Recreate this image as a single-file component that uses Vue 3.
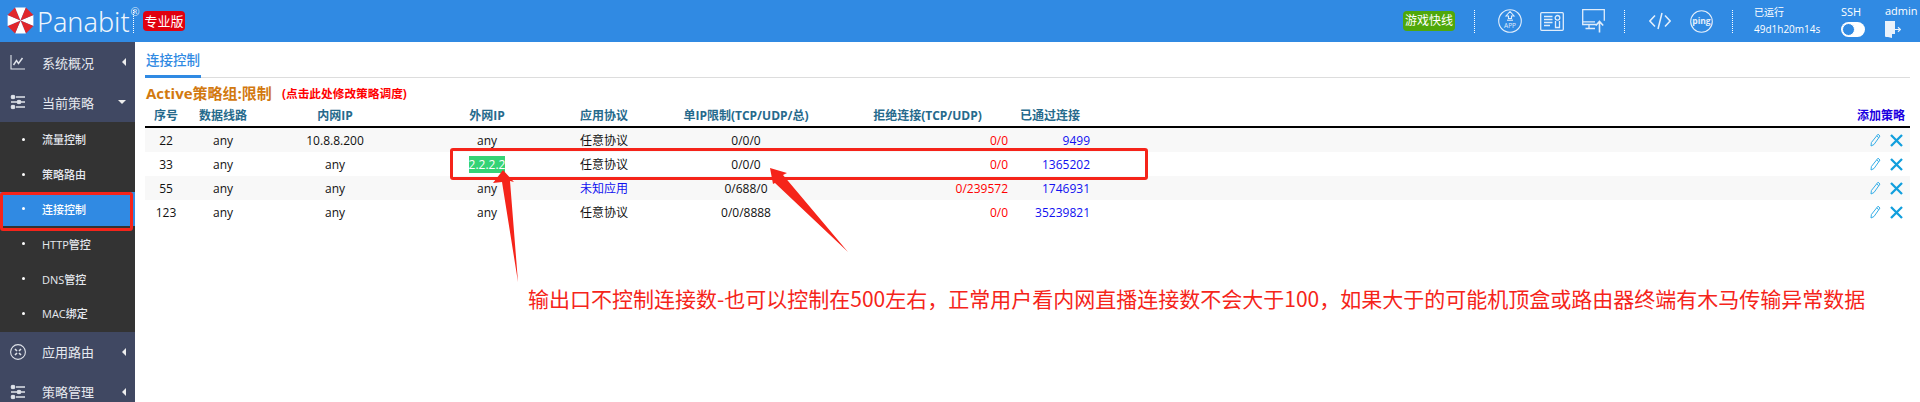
<template>
  <div class="page">
    <header class="topbar">
      <div class="brand">
        <svg class="logo" width="28" height="30" viewBox="0 0 28 30">
          <polygon v-for="(s, i) in umbrella" :key="i" :points="s.points" :fill="s.fill" />
        </svg>
        <span class="brand-name">Panabit</span>
        <span class="reg">®</span>
      </div>
      <i class="dots first"></i>
      <span class="edition">专业版</span>

      <div class="top-right">
        <span class="game">游戏快线</span>
        <i class="dots"></i>
        <div class="tools">
          <svg width="24" height="24" viewBox="0 0 24 24" fill="none" stroke="#e0edfb" stroke-width="1.100">
            <circle cx="12" cy="12" r="11.300" />
            <path d="M12 2.500 8 7h2.500v2.500h3V7H16z" />
            <path d="M9 11.200h6" />
            <text x="12" y="18.800" class="app-txt">APP</text>
          </svg>
          <svg width="24" height="19" viewBox="0 0 24 19" fill="none" stroke="#e0edfb" stroke-width="1.300">
            <rect x=".7" y=".7" width="22.600" height="17.600" rx="1" />
            <path d="M4 4.500h8.500M4 7.500h8.500M4 10.500h8.500M4 13.500h6" />
            <circle cx="17.500" cy="5.800" r="2.300" />
            <path d="M15.500 9v6.500h4V9" />
          </svg>
          <svg width="23" height="24" viewBox="0 0 23 24" fill="none" stroke="#e0edfb" stroke-width="1.300">
            <path d="M14 15.500H.7V.7h21.600v11" />
            <path d="M.7 12.800H13M7 15.500v3.500M3.500 19.500H13" />
            <path d="M17.500 23.500V12.500M13.800 16.500l3.700-4 3.700 4" stroke-width="1.600" />
          </svg>
        </div>
        <i class="dots"></i>
        <div class="tools tools-two">
          <svg width="22" height="18" viewBox="0 0 22 18" fill="none" stroke="#e4effb" stroke-width="1.500">
            <path d="M6 3.500.9 9 6 14.500M16 3.500 21.100 9 16 14.500M13 1 9 17" />
          </svg>
          <svg width="23" height="23" viewBox="0 0 23 23" fill="none" stroke="#e4effb" stroke-width="1.100">
            <circle cx="11.500" cy="11.500" r="10.800" />
            <text x="11.500" y="14" class="ping-txt">ping</text>
          </svg>
        </div>
        <i class="dots"></i>
        <div class="uptime">
          <span>已运行</span>
          <span>49d1h20m14s</span>
        </div>
        <div class="ssh">
          <span>SSH</span>
          <span class="toggle"><b></b></span>
        </div>
        <div class="user">
          <span>admin</span>
          <svg width="16" height="17" viewBox="0 0 16 17">
            <path d="M0 0h10v3.500H6v9L0 16z" fill="#eaf2fb" />
            <path d="M1 1.500h9V13H7v4l-4-1H1z" fill="#eaf2fb" />
            <path d="M9.500 8.500h5M13 6.300l2.500 2.200-2.500 2.200" fill="none" stroke="#eaf2fb" stroke-width="1.200" />
          </svg>
        </div>
      </div>
    </header>

    <div class="body">
      <aside class="sidebar">
        <template v-for="item in menu" :key="item.label">
          <div class="nav-item">
            <svg class="nav-icon" width="16" height="16" viewBox="0 0 16 16" fill="none" stroke="#dfe3ea" stroke-width="1.100" v-html="icons[item.icon]"></svg>
            <span class="nav-label">{{ item.label }}</span>
            <i :class="item.open ? 'caret-down' : 'caret-left'"></i>
          </div>
          <div v-if="item.children" class="sub-menu">
            <div
              v-for="child in item.children"
              :key="child"
              class="sub-item"
              :class="{ active: child === '连接控制' }"
            >
              <i class="bullet"></i>
              <span>{{ child }}</span>
            </div>
          </div>
        </template>
      </aside>

      <main class="content">
        <div class="tabs"><span class="tab">连接控制</span></div>
        <div class="title">
          <span class="title-main">Active策略组:限制</span>
          <span class="title-note">(点击此处修改策略调度)</span>
        </div>
        <div class="row head">
          <span>序号</span>
          <span>数据线路</span>
          <span>内网IP</span>
          <span>外网IP</span>
          <span>应用协议</span>
          <span>单IP限制(TCP/UDP/总)</span>
          <span>拒绝连接(TCP/UDP)</span>
          <span>已通过连接</span>
          <span class="add">添加策略</span>
        </div>
        <div v-for="r in rows" :key="r.id" class="row">
          <span>{{ r.id }}</span>
          <span>any</span>
          <span>{{ r.inner }}</span>
          <span><em :class="{ mark: r.outer !== 'any' }">{{ r.outer }}</em></span>
          <span :class="{ blue: r.app === '未知应用' }">{{ r.app }}</span>
          <span>{{ r.limit }}</span>
          <span class="red end">{{ r.refused }}</span>
          <span class="blue end pass">{{ r.passed }}</span>
          <span class="actions">
            <svg width="11" height="14" viewBox="0 0 11 14" fill="none" stroke="#35aee8" stroke-width="1">
              <path d="M8 1.200 10 3 4 11.500 1 13l.4-3.500zM6.800 3l2 1.700" />
            </svg>
            <svg width="13" height="13" viewBox="0 0 13 13" fill="none" stroke="#129fdd" stroke-width="2.300">
              <path d="M1 1l11 11M12 1 1 12" />
            </svg>
          </span>
        </div>
      </main>
    </div>

    <!-- red markup drawn on top of the screenshot -->
    <div class="box-side"></div>
    <div class="box-row"></div>
    <svg class="arrows" width="1920" height="402">
      <polygon points="503,170 514,182 510,181 518,282 502,182 493,183" fill="#f5241a" />
      <polygon points="770,168 787,173 783,175 848,252 775,183 773,184" fill="#f5241a" />
    </svg>
    <div class="note">输出口不控制连接数-也可以控制在500左右，正常用户看内网直播连接数不会大于100，如果大于的可能机顶盒或路由器终端有木马传输异常数据</div>
  </div>
</template>

<script setup>
// umbrella logo: eight wedges, white on the axes and red on the diagonals
const cx = 13.5
const cy = 14.5
const umbrella = Array.from({ length: 8 }, (_, i) => {
  const a = ((i * 45 - 22.5) * Math.PI) / 180
  const b = (((i + 1) * 45 - 22.5) * Math.PI) / 180
  const r = 14
  const p = (t) => `${(cx + r * Math.cos(t)).toFixed(1)},${(cy + r * Math.sin(t)).toFixed(1)}`
  return { points: `${cx},${cy} ${p(a)} ${p(b)}`, fill: i % 2 ? '#e0262c' : '#ffffff' }
})

const icons = {
  chart: '<path d="M1 1v14h14"/><path d="M3.500 11 6.500 6.500 8.500 9.500 12.500 4" stroke-width="1.500"/>',
  sliders: '<path d="M6 3h9M1 8h6M11 8h4M6 13h9" stroke-width="1.500"/><circle cx="3" cy="3" r="1.800" fill="#dfe3ea"/><circle cx="9" cy="8" r="1.800" fill="#dfe3ea"/><circle cx="3" cy="13" r="1.800" fill="#dfe3ea"/>',
  route: '<circle cx="8" cy="8" r="7.400"/><path d="M5 5l2 2M11 5 9 7M5 11l2-2M11 11 9 9" stroke-width="1.600"/>'
}

const menu = [
  { label: '系统概况', icon: 'chart' },
  {
    label: '当前策略',
    icon: 'sliders',
    open: true,
    children: ['流量控制', '策略路由', '连接控制', 'HTTP管控', 'DNS管控', 'MAC绑定']
  },
  { label: '应用路由', icon: 'route' },
  { label: '策略管理', icon: 'sliders' }
]

const rows = [
  { id: 22, inner: '10.8.8.200', outer: 'any', app: '任意协议', limit: '0/0/0', refused: '0/0', passed: 9499 },
  { id: 33, inner: 'any', outer: '2.2.2.2', app: '任意协议', limit: '0/0/0', refused: '0/0', passed: 1365202 },
  { id: 55, inner: 'any', outer: 'any', app: '未知应用', limit: '0/688/0', refused: '0/239572', passed: 1746931 },
  { id: 123, inner: 'any', outer: 'any', app: '任意协议', limit: '0/0/8888', refused: '0/0', passed: 35239821 }
]
</script>

<style>
html,
body {
  margin: 0;
  overflow: hidden;
  background: #fff;
}
</style>

<style scoped>
.page {
  position: relative;
  width: 1920px;
  height: 402px;
  overflow: hidden;
  font-family: "Open Sans", "Noto Sans CJK SC", sans-serif;
  font-size: 12px;
  color: #111;
}

/* Top bar */
.topbar {
  display: flex;
  align-items: center;
  height: 42px;
  padding-left: 7px;
  background: #308ae3;
  color: #fff;
}

.brand {
  display: flex;
  align-items: center;
  flex: none;
  width: 126px;
}

.logo {
  flex: none;
}

.brand-name {
  margin-left: 2px;
  font-family: "Noto Sans", sans-serif;
  font-size: 27px;
  font-weight: 300;
  color: #eef5fc;
}

.reg {
  align-self: flex-start;
  margin: 1px 0 0 1px;
  font-size: 11px;
  color: #dce9f8;
}

.dots {
  flex: none;
  width: 0;
  height: 23px;
  border-left: 1px dotted #fff;
}

.dots.first {
  margin-right: 9px;
}

.edition {
  width: 42px;
  height: 20px;
  line-height: 20px;
  border-radius: 4px;
  background: #e0000f;
  text-align: center;
  font-size: 13px;
}

.top-right {
  display: flex;
  align-items: center;
  margin-left: auto;
  width: 517px;
  height: 100%;
}

.game {
  flex: none;
  width: 52px;
  height: 20px;
  line-height: 20px;
  margin-right: 19px;
  border-radius: 4px;
  background: #4fa80a;
  text-align: center;
  font-size: 12px;
}

.tools {
  display: flex;
  align-items: center;
  gap: 18px;
  width: 149px;
  padding-left: 23px;
  box-sizing: border-box;
}

.tools-two {
  gap: 19px;
  width: 107px;
  padding-left: 24px;
}

.app-txt {
  font-size: 6.500px;
  text-anchor: middle;
  fill: #e0edfb;
  stroke: none;
}

.ping-txt {
  font-size: 8.500px;
  font-weight: 700;
  text-anchor: middle;
  fill: #e4effb;
  stroke: none;
}

.uptime,
.ssh,
.user {
  display: flex;
  flex-direction: column;
  gap: 4px;
  font-size: 11px;
  line-height: 13px;
}

.uptime {
  width: 87px;
  margin-left: 21px;
  font-size: 10px;
}

.ssh {
  width: 44px;
}

.toggle {
  position: relative;
  display: block;
  width: 24px;
  height: 15px;
  border-radius: 8px;
  background: #fff;
}

.toggle b {
  position: absolute;
  left: 1px;
  top: 1px;
  width: 13px;
  height: 13px;
  box-sizing: border-box;
  border-radius: 50%;
  background: #308ae3;
  border: 1px solid #fff;
}

/* Sidebar */
.body {
  display: flex;
}

.sidebar {
  flex: none;
  width: 135px;
  background: #404862;
  color: #e6e9ef;
}

.nav-item {
  display: flex;
  align-items: center;
  height: 40px;
  padding-left: 10px;
  font-size: 13px;
}

.nav-label {
  margin-left: 16px;
  width: 78px;
}

.caret-left {
  width: 0;
  height: 0;
  border: 4px solid transparent;
  border-left: 0;
  border-right-color: #eee;
  margin-left: 2px;
}

.caret-down {
  width: 0;
  height: 0;
  border: 4px solid transparent;
  border-bottom: 0;
  border-top-color: #eee;
  margin-left: -2px;
}

.sub-menu {
  background: #333;
  padding-bottom: 1px;
}

.sub-item {
  display: flex;
  align-items: center;
  height: 34.800px;
  padding-left: 22px;
  font-size: 11px;
  font-weight: 500;
}

.sub-item.active {
  background: #308ae3;
  color: #fff;
}

.bullet {
  width: 3px;
  height: 3px;
  margin-right: 17px;
  border-radius: 50%;
  background: #fff;
}

/* Content */
.content {
  flex: 1;
  padding: 0 10px;
}

.tabs {
  height: 35px;
  border-bottom: 1px solid #ddd;
}

.tab {
  display: block;
  width: 56px;
  height: 33px;
  line-height: 36px;
  border-bottom: 3px solid #308ae3;
  color: #308ae3;
  font-size: 13.500px;
  font-weight: 500;
  text-align: center;
}

.title {
  display: flex;
  align-items: center;
  height: 26px;
  padding: 2px 0 0 1px;
  box-sizing: border-box;
}

.title-main {
  width: 136px;
  font-size: 15px;
  font-weight: 700;
  color: #d2790f;
}

.title-note {
  font-size: 11.700px;
  font-weight: 700;
  color: #f00;
}

.row {
  display: grid;
  grid-template-columns: 42px 72px 152px 152px 82px 202px 161px 84px 1fr;
  align-items: center;
  height: 24px;
  text-align: center;
}

.row:nth-child(even) {
  background: #f8f8f8;
}

.row.head {
  height: 22px;
  border-bottom: 2px solid #000;
  background: none;
  font-weight: 700;
  color: #266a8c;
}

.add {
  text-align: right;
  padding-right: 5px;
  color: #1a00e0;
}

.end {
  text-align: right;
}

.pass {
  padding-right: 2px;
}

.red {
  color: #f00;
}

.blue {
  color: #1010f0;
}

em {
  font-style: normal;
}

.mark {
  background: #35d376;
  color: #fff;
}

.actions {
  display: flex;
  justify-content: flex-end;
  align-items: center;
  gap: 9px;
  padding-right: 7px;
}

/* Markup overlay */
.box-side,
.box-row {
  position: absolute;
  box-sizing: border-box;
  border: 3px solid #f5241a;
  border-radius: 3px;
}

.box-side {
  left: 0;
  top: 192px;
  width: 133px;
  height: 39px;
}

.box-row {
  left: 450px;
  top: 148px;
  width: 698px;
  height: 32px;
}

.arrows {
  position: absolute;
  left: 0;
  top: 0;
  pointer-events: none;
}

.note {
  position: absolute;
  left: 528px;
  top: 284px;
  white-space: nowrap;
  font-family: "Noto Sans CJK SC", sans-serif;
  font-size: 21px;
  line-height: 28px;
  color: #f5241a;
}
</style>
